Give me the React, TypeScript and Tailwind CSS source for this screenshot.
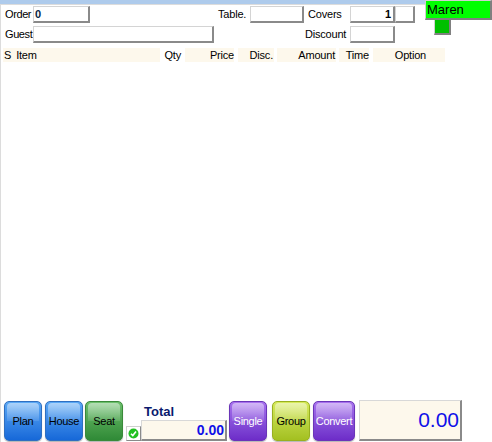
import React from "react";

const inputCls =
  "h-[17px] bg-white border-t border-l border-[#d4d4d4] border-b-2 border-r-2 border-b-[#8a8a8a] border-r-[#8a8a8a] box-border";

function GlossBtn({
  label,
  from,
  to,
  border,
  text,
  w,
  ml,
}: {
  label: string;
  from: string;
  to: string;
  border: string;
  text: string;
  w: string;
  ml: string;
}) {
  return (
    <div
      className={`relative h-[40px] ${w} ${ml} rounded-[5px] border ${border} overflow-hidden flex items-center justify-center bg-gradient-to-b ${from} ${to} shadow-[0_1px_1px_rgba(0,0,0,0.3)]`}
    >
      <div className="absolute left-[2px] right-[2px] top-[1px] h-[18px] rounded-t-[4px] bg-gradient-to-b from-white/50 to-white/10" />
      <span className={`relative text-[11px] tracking-[-0.3px] ${text} whitespace-nowrap`}>{label}</span>
    </div>
  );
}

export default function App() {
  return (
    <div
      className="relative w-[492px] h-[442px] bg-white overflow-hidden text-[11px] text-black"
      style={{ fontFamily: "Tahoma, 'Liberation Sans', Arial, sans-serif" }}
    >
      <div className="h-[4px] w-[426px] bg-[#aecbec]" />
      <div className="h-[438px] border-l border-t border-[#dcdcdc] flex flex-col">
        {/* Row 1 */}
        <div className="mt-[1px] h-[17px] flex items-center">
          <span className="ml-[4px] w-[28px] tracking-[-0.4px]">Order</span>
          <div className={`${inputCls} w-[57px] flex items-center pl-[1px] font-bold text-[#0a1f44]`}>0</div>
          <span className="ml-[128px] w-[32px] tracking-[-0.2px]">Table.</span>
          <div className={`${inputCls} w-[54px]`} />
          <span className="ml-[4px] w-[42px] tracking-[-0.2px]">Covers</span>
          <div className={`${inputCls} w-[45px] flex items-center justify-end pr-[2px] font-bold`}>1</div>
          <div className={`${inputCls} w-[20px]`} />
        </div>
        {/* Row 2 */}
        <div className="mt-[3px] h-[17px] flex items-center">
          <span className="ml-[4px] w-[28px] tracking-[-0.4px]">Guest</span>
          <div className={`${inputCls} w-[181px]`} />
          <span className="ml-[91px] w-[45px] tracking-[-0.2px]">Discount</span>
          <div className={`${inputCls} w-[45px]`} />
        </div>
        {/* Header */}
        <div className="mt-[5px] h-[14px] flex items-center leading-[14px] tracking-[-0.2px]">
          <div className="ml-[2px] w-[157px] h-full bg-[#fdf8ec] flex items-center">
            <span className="ml-[1px]">S</span>
            <span className="ml-[5px]">Item</span>
          </div>
          <div className="w-[22px] h-full flex items-center justify-end pr-[1px]">Qty</div>
          <div className="ml-[3px] w-[49px] h-full bg-[#fdf8ec] flex items-center justify-end">Price</div>
          <div className="ml-[4px] w-[36px] h-full bg-[#fdf8ec] flex items-center justify-end pr-[1px]">Disc.</div>
          <div className="ml-[3px] w-[59px] h-full bg-[#fdf8ec] flex items-center justify-end pr-[1px]">Amount</div>
          <div className="ml-[3px] w-[30px] h-full bg-[#fdf8ec] flex items-center justify-end">Time</div>
          <div className="ml-[4px] w-[72px] h-full bg-[#fdf8ec] flex items-center justify-end pr-[19px]">Option</div>
        </div>
        <div className="flex-1" />
        {/* Bottom */}
        <div className="h-[40px] mb-[1px] flex items-end">
          <GlossBtn label="Plan" from="from-[#5aa8f5]" to="to-[#1668d8]" border="border-[#2f6fc0]" text="text-black" w="w-[38px]" ml="ml-[3px]" />
          <GlossBtn label="House" from="from-[#5aa8f5]" to="to-[#1668d8]" border="border-[#2f6fc0]" text="text-black" w="w-[38px]" ml="ml-[3px]" />
          <GlossBtn label="Seat" from="from-[#6cbf6c]" to="to-[#2f8a36]" border="border-[#3a8a3a]" text="text-black" w="w-[38px]" ml="ml-[2px]" />
          <div className="ml-[3px] w-[102px] h-[40px] flex flex-col">
            <div className="h-[20px] pl-[18px] pt-[2px] flex items-center font-bold text-[13px] text-[#0a1a6e]">Total</div>
            <div className="h-[20px] flex items-end">
              <div className="w-[15px] h-[15px] border-t border-l border-[#d0d0d0] border-b border-r border-b-[#8a8a8a] border-r-[#8a8a8a] bg-white flex items-center justify-center">
                <svg width="11" height="11" viewBox="0 0 11 11">
                  <circle cx="5.5" cy="5.5" r="5" fill="#22c022" />
                  <path d="M3 5.8 L4.8 7.6 L8 3.6" stroke="white" strokeWidth="1.6" fill="none" />
                </svg>
              </div>
              <div className="w-[86px] h-[21px] bg-[#fdf8ec] border-t border-l border-[#d8d8d8] border-b-2 border-r-2 border-b-[#8a8a8a] border-r-[#8a8a8a] flex items-center justify-end pr-[1px] font-bold text-[14px] text-[#1010e8]">
                0.00
              </div>
            </div>
          </div>
          <GlossBtn label="Single" from="from-[#a872ee]" to="to-[#6d2cc8]" border="border-[#6a35b8]" text="text-white" w="w-[38px]" ml="ml-[1px]" />
          <GlossBtn label="Group" from="from-[#d6ea5a]" to="to-[#a3c020]" border="border-[#98b020]" text="text-black" w="w-[38px]" ml="ml-[5px]" />
          <GlossBtn label="Convert" from="from-[#a872ee]" to="to-[#6d2cc8]" border="border-[#6a35b8]" text="text-white" w="w-[42px]" ml="ml-[3px]" />
          <div className="ml-[4px] w-[103px] h-[41px] bg-[#fdf8ec] border-t border-l border-[#d8d8d8] border-b-2 border-r-2 border-b-[#8a8a8a] border-r-[#8a8a8a] flex items-center justify-end pr-[1px] text-[21px] text-[#1010e8]">
            0.00
          </div>
        </div>
      </div>
      {/* Maren */}
      <div className="absolute left-[425px] top-0 w-[67px] h-[20px] bg-[#00ff00] border-b-2 border-r-2 border-[#808080] border-t border-l border-t-[#d0d0d0] border-l-[#d0d0d0] text-[13px] leading-[18px] pl-[1px]">
        Maren
      </div>
      <div className="absolute left-[434px] top-[20px] w-[17px] h-[15px] bg-[#00c000] border-b-2 border-r-2 border-[#808080] border-l border-l-[#d0d0d0]" />
    </div>
  );
}
